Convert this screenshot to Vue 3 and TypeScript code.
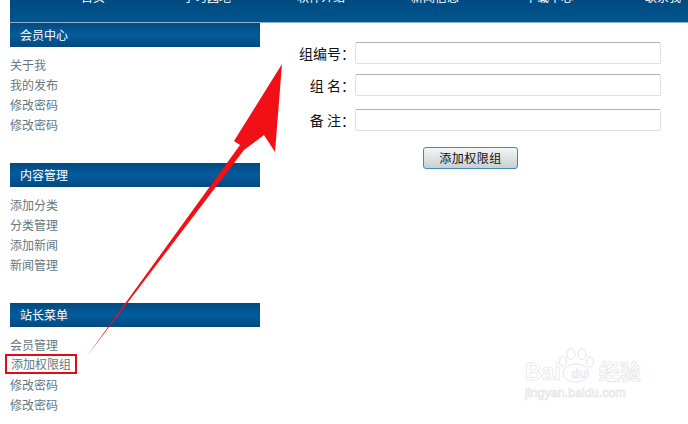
<script setup lang="ts">
const navItems: string[] = ['首页', '学习园地', '软件介绍', '新闻信息', '下载中心', '联系我']
const menus: { title: string; links: { text: string; mark?: boolean }[] }[] = [
  { title: '会员中心', links: [{ text: '关于我' }, { text: '我的发布' }, { text: '修改密码' }, { text: '修改密码' }] },
  { title: '内容管理', links: [{ text: '添加分类' }, { text: '分类管理' }, { text: '添加新闻' }, { text: '新闻管理' }] },
  { title: '站长菜单', links: [{ text: '会员管理' }, { text: '添加权限组', mark: true }, { text: '修改密码' }, { text: '修改密码' }] },
]
const fields: { label: string; cls: string }[] = [
  { label: '组编号：', cls: 'r1' },
  { label: '组 名：', cls: 'r2' },
  { label: '备 注：', cls: 'r3' },
]
</script>

<template>
  <div class="page">
    <header class="topbar">
      <span v-for="n in navItems" :key="n" class="nav">{{ n }}</span>
    </header>
    <div class="body">
      <aside class="side">
        <section v-for="m in menus" :key="m.title" class="menu">
          <h3 class="head">{{ m.title }}</h3>
          <ul class="links">
            <li v-for="(l, i) in m.links" :key="i"><span :class="{ mark: l.mark }">{{ l.text }}</span></li>
          </ul>
        </section>
      </aside>
      <main class="main">
        <div v-for="f in fields" :key="f.label" class="row" :class="f.cls">
          <label class="lab">{{ f.label }}</label>
          <input class="inp" type="text" />
        </div>
        <div class="actions"><button class="btn" type="button">添加权限组</button></div>
      </main>
    </div>

    <svg class="arrow" width="688" height="424" viewBox="0 0 688 424">
      <polygon fill="#f01015" points="87,356 240,145 234,141 282,64 275,152 264,135 244,150" />
    </svg>

    <div class="wm">
      <div class="wm-top"><span class="wm-b">Bai</span><svg class="paw" width="38" height="36" viewBox="0 0 38 36"><g fill="#fff" stroke="#e6e6e6" stroke-width="1"><ellipse cx="6" cy="13" rx="3.5" ry="5"/><ellipse cx="14" cy="6" rx="4" ry="5.5"/><ellipse cx="25" cy="6" rx="4" ry="5.5"/><ellipse cx="33" cy="14" rx="3.5" ry="5"/><ellipse cx="19" cy="25" rx="13" ry="9"/></g></svg><span class="wm-d">du</span><span class="wm-c">经验</span></div>
      <div class="wm-url">jingyan.baidu.com</div>
    </div>
  </div>
</template>

<style>
html, body { margin: 0; background: #fff; }
</style>

<style scoped>
.page {
  position: relative;
  width: 688px;
  height: 424px;
  overflow: hidden;
  background: #fff;
  font-family: "Noto Sans CJK SC", "Liberation Sans", sans-serif;
}
.topbar {
  box-sizing: border-box;
  height: 23px;
  margin-left: 10px;
  background: linear-gradient(#004a80, #02568f);
  border-bottom: 1px solid #8db4d0;
  display: grid;
  grid-template-columns: repeat(6, 114px);
  padding-left: 26px;
}
.nav {
  margin-top: -11px;
  color: #fff;
  font-size: 12px;
  line-height: 16px;
  text-align: center;
}
.body { display: flex; }
.side { width: 250px; margin-left: 10px; flex: none; }
.menu { height: 140px; }
.head {
  margin: 0;
  box-sizing: border-box;
  height: 24px;
  padding-left: 10px;
  background: linear-gradient(#024a80, #035c9c 50%, #024a80);
  color: #fff;
  font-size: 12px;
  font-weight: 400;
  line-height: 23px;
}
.links { list-style: none; margin: 8px 0 0; padding: 0; }
.links li {
  height: 20px;
  line-height: 20px;
  font-size: 12px;
  color: #66777f;
}
.mark {
  display: inline-block;
  margin-left: -5px;
  padding: 0 4px;
  height: 16px;
  line-height: 16px;
  margin-top: 1px;
  vertical-align: top;
  border: 2.5px solid #e00d14;
  box-sizing: content-box;
  margin-top: -1px;
}
.main { width: 371px; margin-left: 30px; padding-top: 19px; }
.row { display: flex; align-items: center; height: 22px; }
.r2 { margin-top: 10px; }
.r3 { margin-top: 13px; }
.lab {
  width: 65px;
  flex: none;
  text-align: right;
  font-size: 14px;
  color: #111;
  white-space: pre;
}
.inp {
  box-sizing: border-box;
  width: 306px;
  height: 22px;
  margin: 0;
  border: 1px solid #dde1e4;
  border-top-color: #b0b0b0;
  border-radius: 2px;
  background: #fff;
}
.actions { padding-left: 133px; margin-top: 13px; }
.btn {
  box-sizing: border-box;
  width: 95px;
  height: 22px;
  padding: 0;
  border: 1px solid #3a8db8;
  border-radius: 3px;
  background: linear-gradient(#f4f6f7, #c9ced1);
  color: #111;
  font-family: inherit;
  font-size: 12px;
  line-height: 18px;
  letter-spacing: 0.5px;
}
.arrow { position: absolute; left: 0; top: 0; pointer-events: none; }
.wm {
  position: absolute;
  left: 525px;
  top: 348px;
  color: #fff;
  -webkit-text-stroke: 0.6px #e2e2e2;
  font-family: "Liberation Sans", "Noto Sans CJK SC", sans-serif;
}
.wm-top { display: flex; align-items: flex-end; height: 36px; font-size: 23px; line-height: 24px; font-weight: 700; }
.paw { margin-left: -4px; margin-right: -31px; flex: none; }
.wm-d { font-size: 13px; line-height: 20px; width: 31px; text-align: center; }
.wm-c { font-size: 21px; margin-left: 4px; }
.wm-url { font-size: 12.5px; line-height: 15px; margin-top: 2px; }
</style>
